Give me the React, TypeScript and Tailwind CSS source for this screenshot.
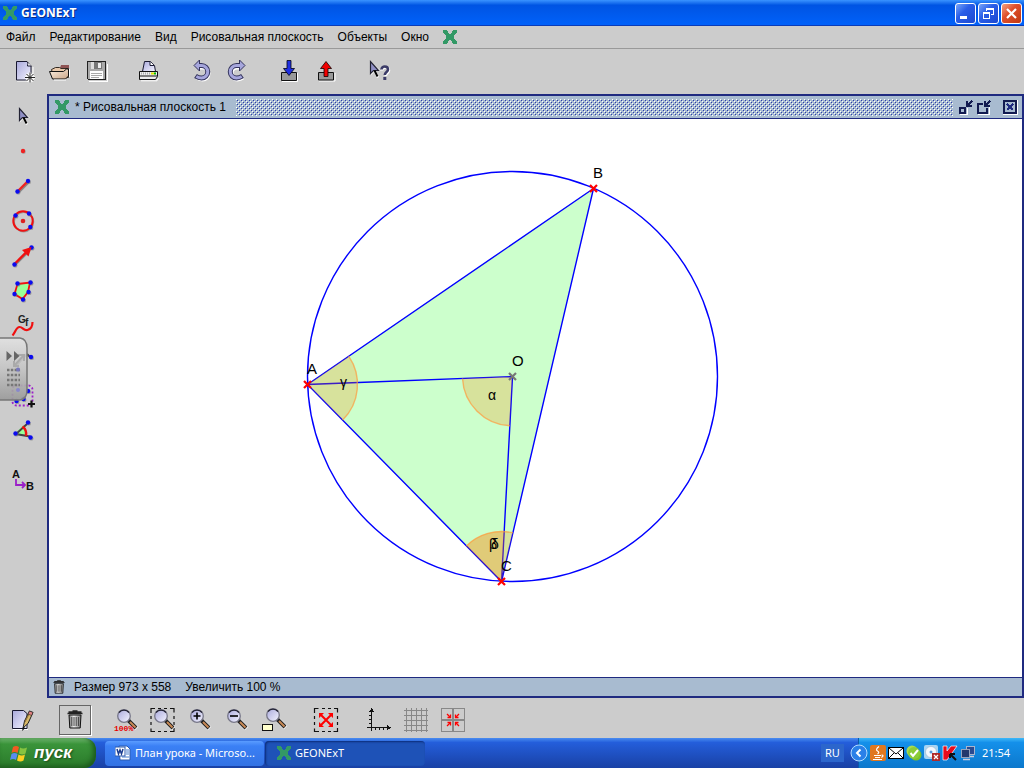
import React from "react";

type IconProps = { children: React.ReactNode; crisp?: boolean };

function Icon({ children, crisp }: IconProps) {
  return (
    <svg
      viewBox="0 0 24 24"
      className="block size-6 shrink-0 overflow-visible"
      fill="none"
      shapeRendering={crisp ? "crispEdges" : "auto"}
      aria-hidden="true"
    >
      {children}
    </svg>
  );
}

function Logo() {
  return (
    <svg viewBox="0 0 14 14" className="block size-3.5 shrink-0" shapeRendering="crispEdges" aria-hidden="true">
      <path
        fill="#339966"
        d="M0 0h4v1h1v2h1v1h2v-1h1v-2h1v-1h4v3h-1v1h-1v1h-1v4h1v1h1v1h1v3h-4v-1h-1v-2h-1v-1h-2v1h-1v2h-1v1h-4v-3h1v-1h1v-1h1v-4h-1v-1h-1v-1h-1z"
      />
    </svg>
  );
}

function ToolButton({ label, children }: { label: string; children: React.ReactNode }) {
  return (
    <button type="button" aria-label={label} className="block size-6 shrink-0">
      {children}
    </button>
  );
}

function Defs() {
  return (
    <svg className="absolute size-0" aria-hidden="true">
      <defs>
        <linearGradient id="lav" x1="0" y1="0" x2="1" y2="1">
          <stop offset="0" stopColor="#a9a9dc" />
          <stop offset="1" stopColor="#f4f4ff" />
        </linearGradient>
        <linearGradient id="tan" x1="0" y1="0" x2="1" y2="1">
          <stop offset="0" stopColor="#fff4e6" />
          <stop offset="1" stopColor="#c9a385" />
        </linearGradient>
        <linearGradient id="steel" x1="0" y1="0" x2="1" y2="0">
          <stop offset="0" stopColor="#777" />
          <stop offset="0.4" stopColor="#eee" />
          <stop offset="1" stopColor="#777" />
        </linearGradient>
        <linearGradient id="tab" x1="0" y1="0" x2="0" y2="1">
          <stop offset="0" stopColor="#e2e2e2" />
          <stop offset="0.5" stopColor="#c4c4c4" />
          <stop offset="1" stopColor="#999" />
        </linearGradient>
        <pattern id="bumps" width="4" height="4" patternUnits="userSpaceOnUse">
          <path fill="#fff" d="M0 0h1v1h-1zM2 2h1v1h-1z" />
          <path fill="#2a3cb0" d="M1 1h1v1h-1zM3 3h1v1h-1z" />
        </pattern>
      </defs>
    </svg>
  );
}

function ArrowCursor({ x, y }: { x: number; y: number }) {
  return (
    <g transform={`translate(${x} ${y})`}>
      <path d="M1 1v13l3-3 3 6 2-1-3-6h5z" fill="#fff" />
      <path d="M.5 .5v12l3-3h5z" fill="#8f8fc4" stroke="#223" strokeWidth="1.200" />
      <path d="M4.500 9.500l3 6" stroke="#000" strokeWidth="2" />
    </g>
  );
}

function Lens({ x = 0, y = 0, sign }: { x?: number; y?: number; sign?: "plus" | "minus" }) {
  return (
    <g transform={`translate(${x} ${y})`}>
      <path d="M13 12l7.500 7.500" stroke="#fff" strokeWidth="5" />
      <path d="M12 11l8 8" stroke="#222" strokeWidth="4" />
      <path d="M14 13l5.500 5.500" stroke="#c98a55" strokeWidth="2" />
      <circle cx="8" cy="7" r="6.300" fill="url(#lav)" stroke="#778" strokeWidth="1.300" />
      <path d="M3 3.500a6.300 6.300 0 0 1 10 0" stroke="#223" strokeWidth="1.300" />
      {sign && <path d={sign === "plus" ? "M4.500 7h7M8 3.500v7" : "M4 7h8"} stroke="#000" strokeWidth="1.600" />}
    </g>
  );
}

function Dot({ x, y }: { x: number; y: number }) {
  return (
    <>
      <circle cx={x + 0.8} cy={y + 0.9} r="2.200" fill="#777" opacity="0.6" />
      <circle cx={x} cy={y} r="2.200" fill="#0b0bef" />
    </>
  );
}

function TrashShape() {
  return (
    <>
      <path d="M6 8h12l-.8 13h-10.400z" fill="url(#steel)" stroke="#111" />
      <path d="M8.800 10v9M11 10v9M13.200 10v9M15.400 10v9" stroke="#333" strokeWidth=".9" />
      <path d="M4.500 6.500h15M9.500 4h5M5.500 5h13" stroke="#222" strokeWidth="1.300" />
    </>
  );
}

function TopToolbar() {
  return (
    <div role="toolbar" aria-label="Файл" className="flex h-[45px] shrink-0 items-center gap-7 px-[13px] pb-px">
      <div className="flex gap-3">
        <ToolButton label="Новый">
          <Icon>
            <path d="M4 22h15M20 8v8" stroke="#fff" />
            <path d="M3.500 2.500h10.500l4 4.500v14h-14.500z" fill="url(#lav)" stroke="#181830" />
            <path d="M13.500 2.500c2 1 1 3 1 4.500h4" fill="#fff" stroke="#181830" />
            <path d="M12 18.500h10M17 13.500v10M13.500 15l7 7M20.500 15l-7 7" stroke="#fff" strokeWidth="2.500" />
            <path d="M12 18.500h10M17 13.500v10M13.500 15l7 7M20.500 15l-7 7" stroke="#222" strokeWidth="1" />
          </Icon>
        </ToolButton>
        <ToolButton label="Открыть">
          <Icon>
            <path d="M12 6h8v3h-9z" fill="#8f5454" />
            <path d="M2.500 10.500l4-2h4l1.500 1h7.500v9h-15z" fill="#e8c8aa" stroke="#332a22" />
            <path d="M.5 12.500h14l3-2.500h2v7l-3 3h-13z" fill="url(#tan)" stroke="#111" />
            <path d="M5 21h12M20.500 10v8" stroke="#fff" />
          </Icon>
        </ToolButton>
        <ToolButton label="Сохранить">
          <Icon crisp>
            <path d="M4 22h18V5" stroke="#fff" />
            <path d="M2.500 2.500h18v18h-17l-1-1z" fill="#aaa" stroke="#222" />
            <rect x="6" y="3" width="11" height="7" fill="#ddd" />
            <rect x="9" y="3" width="8" height="7" fill="#777" />
            <rect x="13" y="4" width="3" height="5" fill="#eee" />
            <rect x="5" y="12" width="13" height="8" fill="#fff" />
            <path d="M6 14.500h11M6 16.500h11M6 18.500h8" stroke="#aaa" />
          </Icon>
        </ToolButton>
      </div>
      <ToolButton label="Печать">
        <Icon>
          <path d="M5.500 12.500l2-10h6l4 4 1 6z" fill="url(#lav)" stroke="#181830" />
          <path d="M13 2.500v4h4" fill="#fff" stroke="#181830" />
          <path d="M2.500 12.500h18v5l-2 3h-16z" fill="#eee" stroke="#111" />
          <path d="M3 17h17" stroke="#111" />
          <path d="M4 14.500h10" stroke="#aaa" strokeWidth="2" strokeDasharray="1 1" />
          <rect x="14" y="13.500" width="3" height="2" fill="#e8e800" />
          <rect x="17" y="13.500" width="2" height="2" fill="#0b0" />
          <path d="M4 21.800h16l1.500-3" stroke="#fff" />
        </Icon>
      </ToolButton>
      <div className="flex gap-3">
        <ToolButton label="Отменить">
          <Icon>
            <path d="M10 7.500h2.500a5.700 5.700 0 0 1 0 12q-3 0-5.500-2" transform="translate(1 1)" stroke="#fff" strokeWidth="4" />
            <path d="M10 6.500h2.500a6 6 0 0 1 0 12.500q-3 0-6-2" stroke="#33335c" strokeWidth="5" />
            <path d="M5 6.500l5.500-5.500v11z" fill="#a6a6dc" stroke="#33335c" />
            <path d="M9 6.500h3.500a6 6 0 0 1 0 12.500q-2.500 0-5.200-1.500" stroke="#a6a6dc" strokeWidth="3" />
          </Icon>
        </ToolButton>
        <ToolButton label="Повторить">
          <Icon>
            <path d="M14 7.500h-2.500a5.700 5.700 0 0 0 0 12q3 0 5.500-2" transform="translate(1 1)" stroke="#fff" strokeWidth="4" />
            <path d="M15 6.500h-3.500a6 6 0 0 0 0 12.500q3 0 6-2" stroke="#33335c" strokeWidth="5" />
            <path d="M20 6.500l-5.500-5.500v11z" fill="#a6a6dc" stroke="#33335c" />
            <path d="M16 6.500h-4.500a6 6 0 0 0 0 12.500q2.500 0 5.200-1.500" stroke="#a6a6dc" strokeWidth="3" />
          </Icon>
        </ToolButton>
      </div>
      <div className="flex gap-3">
        <ToolButton label="Импорт">
          <Icon>
            <path d="M5 22.500h15.500V14" stroke="#fff" />
            <path d="M4.500 13.500h15v8h-15z" fill="#999" stroke="#111" />
            <path d="M10 1.500h4v8h3.500l-5.500 7-5.500-7h3.500z" fill="#1f2fe0" stroke="#001" strokeWidth=".8" />
          </Icon>
        </ToolButton>
        <ToolButton label="Экспорт">
          <Icon>
            <path d="M6 22h16V14" stroke="#fff" />
            <path d="M5.500 13.500h15v7.500h-15z" fill="#999" stroke="#111" />
            <path d="M11 17.500h4v-8h3.500l-5.500-7-5.500 7h3.500z" fill="#f00000" stroke="#100" strokeWidth=".8" />
          </Icon>
        </ToolButton>
      </div>
      <ToolButton label="Справка">
        <Icon>
          <ArrowCursor x={5} y={2} />
          <path d="M16 10.500c0-4 7-4 7 0c0 2.500-3.200 2.500-3.200 5.500" transform="translate(1 1)" stroke="#fff" strokeWidth="2.500" />
          <path d="M16.500 10.500c0-4 6.500-4 6.500 0c0 2.500-3.200 2.500-3.200 5.500" stroke="#3c3c68" strokeWidth="2.600" />
          <rect x="18.300" y="18" width="3" height="3" fill="#3c3c68" />
        </Icon>
      </ToolButton>
    </div>
  );
}

function LeftToolbar() {
  return (
    <aside className="relative flex w-[47px] shrink-0 flex-col items-center gap-[11px] pt-[10px] pr-px">
      <ToolButton label="Указатель">
        <Icon>
          <ArrowCursor x={8} y={4} />
        </Icon>
      </ToolButton>
      <ToolButton label="Точка">
        <Icon>
          <circle cx="12.700" cy="12.800" r="2.200" fill="#888" opacity=".5" />
          <circle cx="12" cy="12" r="2.200" fill="#e22" />
        </Icon>
      </ToolButton>
      <ToolButton label="Отрезок">
        <Icon>
          <path d="M7.500 18.500l10-10" stroke="#888" strokeWidth="2.400" />
          <path d="M6.500 17.500l10-10" stroke="#e22" strokeWidth="2.400" />
          <Dot x={6.5} y={17.5} />
          <Dot x={17} y={7} />
        </Icon>
      </ToolButton>
      <ToolButton label="Окружность">
        <Icon>
          <circle cx="12.700" cy="12.800" r="9.700" stroke="#999" strokeWidth="1.800" />
          <circle cx="12" cy="12" r="9.700" stroke="#f01010" strokeWidth="2" />
          <circle cx="12" cy="12" r="2.300" fill="#d22" />
          <Dot x={4.5} y={6.5} />
          <Dot x={18} y={4.5} />
          <Dot x={19.3} y={18} />
        </Icon>
      </ToolButton>
      <ToolButton label="Вектор">
        <Icon>
          <path d="M4 21l15-15" stroke="#888" strokeWidth="2.400" />
          <path d="M3.500 20l15-15" stroke="#f01010" strokeWidth="2.400" />
          <Dot x={3.5} y={20.5} />
          <Dot x={20.5} y={3.5} />
          <path d="M20.500 3l-3 9.500-6.500-6.500z" fill="#f01010" />
        </Icon>
      </ToolButton>
      <ToolButton label="Многоугольник">
        <Icon>
          <path d="M6.500 5l12.500-1.500-2 9.500-5.500 7-8-5z" fill="#9f9" stroke="#f01010" strokeWidth="1.800" />
          <Dot x={6.5} y={4.5} />
          <Dot x={19.5} y={3.5} />
          <Dot x={17.5} y={13} />
          <Dot x={12} y={20.5} />
          <Dot x={3.5} y={15} />
        </Icon>
      </ToolButton>
      <ToolButton label="Функция">
        <Icon>
          <path d="M1.500 21.500c3-3 3.500-8.500 7-8.500s4 4 8 3s5-4 5-8" stroke="#f01010" strokeWidth="2.200" />
          <text x="7" y="9" fontSize="10" fontWeight="700" fill="#222" className="font-['Liberation_Sans',sans-serif]">
            G
          </text>
          <text x="14" y="12" fontSize="10" fontWeight="700" fill="#222" className="font-['Liberation_Sans',sans-serif]">
            f
          </text>
        </Icon>
      </ToolButton>
      <ToolButton label="Прямая">
        <Icon>
          <path d="M4 18l12-13M16 5l4 4" stroke="#444" strokeWidth="2" />
          <Dot x={20} y={8} />
          <Dot x={7} y={21} />
        </Icon>
      </ToolButton>
      <ToolButton label="Группа">
        <Icon>
          <rect x="1.500" y="1.500" width="20" height="20" rx="4" stroke="#9b1fc8" strokeWidth="1.800" strokeDasharray="2 2" />
          <Dot x={17} y={7} />
          <Dot x={12.5} y={15} />
          <Dot x={5.5} y={17} />
          <path d="M17 20h7M20.500 16.500v7" stroke="#111" strokeWidth="2.200" />
        </Icon>
      </ToolButton>
      <ToolButton label="Угол">
        <Icon>
          <path d="M4 14.500l8-8q4 3 3 9z" fill="#9f9" />
          <path d="M16 5l-11 10 14 2.500" stroke="#444" strokeWidth="2" />
          <path d="M11.500 7.500q4.500 3.500 3.500 9.500" stroke="#f01010" strokeWidth="2.400" />
          <Dot x={4.5} y={14.5} />
          <Dot x={17} y={3.5} />
          <Dot x={19.5} y={18.5} />
        </Icon>
      </ToolButton>
      <div className="mt-3.5">
        <ToolButton label="Текст">
          <Icon>
            <text x="1" y="10" fontSize="11" fontWeight="700" fill="#111" className="font-['Liberation_Sans',sans-serif]">
              A
            </text>
            <text x="15" y="22" fontSize="11" fontWeight="700" fill="#111" className="font-['Liberation_Sans',sans-serif]">
              B
            </text>
            <path d="M5 11v6h8M11 14l3 3-3 3" stroke="#9b1fc8" strokeWidth="1.800" />
          </Icon>
        </ToolButton>
      </div>
      <button type="button" aria-label="Панель" className="absolute top-[243px] left-0 h-16 w-7">
        <svg viewBox="0 0 28 64" className="block h-full w-full" fill="none" aria-hidden="true">
          <path d="M-2 1h22q7 1 7 10v42q0 9-7 10h-22z" fill="url(#tab)" fillOpacity=".9" stroke="#777" strokeWidth="1.500" />
          <path d="M14 29l10-11M18 18h6v6M14 24v5h5" stroke="#aaa" strokeWidth="2" />
          <path d="M6.500 14v10l5.500-5zM14 14v10l5.500-5z" fill="#666" />
          <path d="M7 33h13M7 38h13M7 43h13M7 48h13" stroke="#777" strokeWidth="2.500" strokeDasharray="2.500 1.300" />
          <circle cx="18" cy="32.500" r="2" fill="#7777bb" />
          <circle cx="18" cy="53" r="2" fill="#8888cc" />
        </svg>
      </button>
    </aside>
  );
}

const points = [
  { x: 307.5, y: 384.5, color: "#ff0000" },
  { x: 593.5, y: 188.5, color: "#ff0000" },
  { x: 501.5, y: 581.5, color: "#ff0000" },
  { x: 512.5, y: 376.5, color: "#777777" },
];

const labels = [
  { t: "A", x: 307, y: 374 },
  { t: "B", x: 593, y: 178 },
  { t: "C", x: 501, y: 571 },
  { t: "O", x: 512, y: 366 },
  { t: "α", x: 488, y: 400 },
  { t: "γ", x: 340, y: 387 },
  { t: "β", x: 489, y: 549 },
  { t: "δ", x: 491, y: 549 },
];

function Drawing() {
  return (
    <svg viewBox="49 119 973 558" className="block min-h-0 w-full flex-1 bg-white" fill="none">
      <polygon points="307.5,384.5 593.5,188.5 501.5,581.5" fill="#ccffcc" />
      <g stroke="#0000ff" strokeWidth="1.400">
        <circle cx="512.5" cy="376.5" r="205" />
        <path d="M307.500 384.500L593.500 188.500L501.500 581.500L307.500 384.500L512.500 376.500L501.500 581.500" />
      </g>
      <g fill="#ff8000" fillOpacity="0.23">
        <path d="M307.500 384.500L348.700 356.200A50 50 0 0 1 342.600 420.100z" />
        <path d="M512.500 376.500L462.500 378.500A50 50 0 0 0 509.800 425.800z" />
        <path d="M501.500 581.500L466.400 545.900A50 50 0 0 1 504.200 531.600z" />
        <path d="M501.500 581.500L466.400 545.900A50 50 0 0 1 512.900 532.800z" />
      </g>
      <g stroke="#ff9a3c" strokeOpacity="0.7" strokeWidth="1.400">
        <path d="M348.700 356.200A50 50 0 0 1 342.600 420.100" />
        <path d="M462.500 378.500A50 50 0 0 0 509.800 425.800" />
        <path d="M466.400 545.900A50 50 0 0 1 512.900 532.800" />
      </g>
      {points.map((p) => (
        <path
          key={`${p.x}`}
          d={`M${p.x - 3.5} ${p.y - 3.5}l7 7m0 -7l-7 7`}
          stroke={p.color}
          strokeWidth="2.200"
        />
      ))}
      {labels.map((l) => (
        <text
          key={l.t}
          x={l.x}
          y={l.y}
          fill="#000"
          fontSize={l.t < "a" ? 15 : 14}
          className="font-['Liberation_Sans',sans-serif]"
        >
          {l.t}
        </text>
      ))}
    </svg>
  );
}

function InnerFrame() {
  return (
    <section className="flex min-w-0 flex-1 flex-col border-2 border-[#1f2a80] bg-[#a8bbd0]">
      <header className="flex h-[23px] shrink-0 items-center border-b border-[#1f2a80] pr-[5px] pl-1.5">
        <Logo />
        <h2 className="mr-2.5 ml-1.5 text-xs whitespace-nowrap">* Рисовальная плоскость 1</h2>
        <svg className="h-[17px] min-w-0 flex-1" shapeRendering="crispEdges" aria-hidden="true">
          <rect width="100%" height="100%" fill="url(#bumps)" />
        </svg>
        <div className="ml-1.5 flex items-center">
          <button type="button" aria-label="Свернуть" className="mr-1 block size-3.5">
            <svg viewBox="0 0 14 14" className="block size-full overflow-visible" fill="none" shapeRendering="crispEdges" aria-hidden="true">
              <path d="M1 14h7V8" stroke="#fff" />
              <rect x="1" y="8" width="5" height="5" stroke="#111a50" strokeWidth="2" />
              <path d="M8 1v5h5M8 6l5-5" stroke="#111a50" strokeWidth="2" />
            </svg>
          </button>
          <button type="button" aria-label="Развернуть" className="mr-3 block size-3.5">
            <svg viewBox="0 0 14 14" className="block size-full overflow-visible" fill="none" shapeRendering="crispEdges" aria-hidden="true">
              <path d="M1 14h11V7" stroke="#fff" />
              <path d="M6 4h-5v9h9V8" stroke="#111a50" strokeWidth="2" />
              <path d="M8 1v5h5M8 6l5-5" stroke="#111a50" strokeWidth="2" />
            </svg>
          </button>
          <button type="button" aria-label="Закрыть" className="block size-3.5">
            <svg viewBox="0 0 14 14" className="block size-full overflow-visible" fill="none" shapeRendering="crispEdges" aria-hidden="true">
              <path d="M0 14.500h14.500V0" stroke="#fff" />
              <rect x="1" y="1" width="12" height="12" stroke="#111a50" strokeWidth="2" />
              <path d="M4 4l6 6M10 4l-6 6" stroke="#1f2a80" strokeWidth="2" />
            </svg>
          </button>
        </div>
      </header>
      <Drawing />
      <footer className="flex h-[19px] shrink-0 items-center border-t border-[#1f2a80] pl-[3px] text-xs whitespace-nowrap">
        <svg viewBox="4 3 16 19" className="mr-2 block h-3.5 w-3.5" fill="none" aria-hidden="true">
          <TrashShape />
        </svg>
        <span className="mr-3.5">Размер 973 x 558</span>
        <span>Увеличить 100 %</span>
      </footer>
    </section>
  );
}

function BottomToolbar() {
  return (
    <div role="toolbar" aria-label="Вид" className="flex h-10 shrink-0 items-center pt-1 pl-2.5">
      <ToolButton label="Правка">
        <Icon>
          <path d="M2.500 2.500h11l3.500 3v15h-14.500z" fill="url(#lav)" stroke="#181830" />
          <path d="M3 21.500h15" stroke="#fff" />
          <path d="M13 20l1.500-7 5-10 3.500 1.500-5 11z" fill="#d9b96a" stroke="#222" />
          <path d="M15 14l5-10" stroke="#8a6a30" />
          <path d="M19.500 3l3.500 1.500-1.500 3-3.500-1.500z" fill="#e08080" stroke="#222" strokeWidth=".6" />
          <path d="M12 23l1-4 2.500 1z" fill="#111" />
        </Icon>
      </ToolButton>
      <button
        type="button"
        aria-label="Корзина"
        className="ml-[25px] flex h-[30px] w-8 items-center justify-center border border-[#666] shadow-[1px_1px_0_#fff]"
      >
        <Icon>
          <g transform="translate(0 -1)">
            <TrashShape />
          </g>
        </Icon>
      </button>
      <div className="ml-[22px] flex gap-[13px]">
        <ToolButton label="100%">
          <Icon>
            <Lens x={3} y={1} />
            <text x="1" y="23" fontSize="8" fontWeight="700" fill="#e80000" className="font-['Liberation_Mono',monospace]">
              100%
            </text>
          </Icon>
        </ToolButton>
        <ToolButton label="Увеличить область">
          <Icon>
            <path d="M1 5v-4.500h4M8 .500h3M14 .500h3M20 .500h4v4M24 8v3M24 14v3M24 20v3.500h-4M17 23.500h-3M11 23.500h-3M5 23.500h-4v-3M1 17v-3M1 11v-3" stroke="#111" strokeWidth="1.200" />
            <Lens x={3} y={1} />
          </Icon>
        </ToolButton>
        <ToolButton label="Увеличить">
          <Icon>
            <Lens x={2} y={1} sign="plus" />
          </Icon>
        </ToolButton>
        <ToolButton label="Уменьшить">
          <Icon>
            <Lens x={2} y={1} sign="minus" />
          </Icon>
        </ToolButton>
        <ToolButton label="Лупа">
          <Icon>
            <Lens x={4} y={0} />
            <rect x="1.500" y="16.500" width="10" height="6" fill="#ffffcc" stroke="#111" />
          </Icon>
        </ToolButton>
      </div>
      <div className="ml-[29px]">
        <ToolButton label="По размеру">
          <Icon>
            <path d="M.5 5v-4.500h4M8 .500h3M14 .500h3M20 .500h3.500v4M23.500 8v3M23.500 14v3M23.500 20v3.500h-4M17 23.500h-3M11 23.500h-3M5 23.500h-4.500v-3M.5 17v-3M.5 11v-3" stroke="#111" strokeWidth="1.200" />
            <path d="M7 7l10 10M17 7L7 17" stroke="#f00" strokeWidth="2" />
            <path d="M5 5h5l-5 5zM19 5h-5l5 5zM5 19h5l-5-5zM19 19h-5l5-5z" fill="#f00" />
          </Icon>
        </ToolButton>
      </div>
      <div className="ml-[29px] flex gap-[13px]">
        <ToolButton label="Оси">
          <Icon crisp>
            <path d="M4.500 2v21M0 19.500h22M2 15.500h3M2 11.500h3M2 7.500h3M8.500 19v3M12.500 19v3M16.500 19v3" stroke="#111" />
            <path d="M2 4l2.500-4 3 4zM20 17l4 2.500-4 3z" fill="#111" />
          </Icon>
        </ToolButton>
        <ToolButton label="Сетка">
          <Icon crisp>
            <path d="M0 2.500h24M0 7.500h24M0 12.500h24M0 17.500h24M0 22.500h24M2.500 0v24M7.500 0v24M12.500 0v24M17.500 0v24M22.500 0v24" stroke="#888" />
          </Icon>
        </ToolButton>
        <ToolButton label="Привязка">
          <Icon crisp>
            <rect x=".5" y=".5" width="23" height="23" stroke="#888" />
            <path d="M12 1v22M1 12h22" stroke="#888" strokeWidth="2" />
            <g stroke="#f00" shapeRendering="auto" strokeWidth="1.300">
              <path d="M6 6l3 3M18 6l-3 3M6 18l3-3M18 18l-3-3" />
              <path d="M9.500 6.500v3h-3M14.500 6.500v3h3M9.500 17.500v-3h-3M14.500 17.500v-3h3" />
            </g>
          </Icon>
        </ToolButton>
      </div>
    </div>
  );
}

function Taskbar() {
  return (
    <footer className="flex h-[30px] shrink-0 items-stretch bg-linear-to-b from-[#4a8cf0] via-[#245edb] to-[#1941a5] via-15% font-['Noto_Sans',sans-serif] text-[11px] text-white">
      <button
        type="button"
        className="flex w-24 items-center gap-1.5 rounded-r-xl bg-linear-to-b from-[#6fb56f] via-[#3a943a] to-[#2a7a2a] via-20% pl-2.5 shadow-[inset_-3px_-2px_5px_#1c5a1c]"
      >
        <svg viewBox="0 0 18 18" className="size-[18px] shrink-0" aria-hidden="true">
          <path d="M3 3q3-2 6 0l-1.500 6q-3-2-6 0z" fill="#f25a22" />
          <path d="M10 3.500q3 2 7 0l-1.500 6q-3 2-6.500 0z" fill="#86c440" />
          <path d="M1.500 10q3-2 6 0l-1.500 6q-3-2-6 0z" fill="#5a8cf0" />
          <path d="M8.500 10.500q3 2 6.500 0l-1.500 6q-3 2-6.500 0z" fill="#fcd022" />
        </svg>
        <span className="font-['Liberation_Sans',sans-serif] text-[17px] font-bold italic [text-shadow:1px_1px_2px_#1a4a1a]">
          пуск
        </span>
      </button>
      <div className="ml-[9px] flex items-center gap-px">
        <button
          type="button"
          className="flex h-[25px] w-[159px] items-center gap-1 rounded-sm bg-linear-to-b from-[#5a9cff] via-[#3b80f5] to-[#3272e4] via-20% pl-2.5 whitespace-nowrap"
        >
          <svg viewBox="0 0 16 16" className="size-4 shrink-0" aria-hidden="true">
            <path d="M4 1h8l3 3v11H5z" fill="#fff" stroke="#2a5ab0" />
            <path d="M11 5h3M11 7h3M11 9h3M7 12h7" stroke="#4a80d0" />
            <rect x="0" y="2" width="10" height="9" fill="#fff" stroke="#2a5ab0" />
            <path d="M2 4l1.500 5L5 5l1.500 4L8 4" fill="none" stroke="#1a3c90" strokeWidth="1.500" />
          </svg>
          План урока - Microso...
        </button>
        <button
          type="button"
          className="flex h-[25px] w-40 items-center gap-1 rounded-sm bg-[#1e52b7] pl-3 shadow-[inset_1px_1px_2px_#0c2c78]"
        >
          <Logo />
          GEONExT
        </button>
      </div>
      <div className="mr-3.5 ml-auto flex items-center">
        <span className="bg-[#2c66cc] px-1 py-px">RU</span>
      </div>
      <div className="relative flex items-center gap-0.5 bg-linear-to-b from-[#3cb8f8] via-[#1490ea] to-[#0c78cc] via-15% pr-3.5 pl-2 shadow-[inset_1px_0_0_#0a5aa8]">
        <button type="button" aria-label="Показать значки" className="-ml-4 block size-[18px]">
          <svg viewBox="0 0 18 18" className="block size-full" fill="none" aria-hidden="true">
            <circle cx="9" cy="9" r="8" fill="#2a80e8" stroke="#b4dcff" />
            <path d="M10.500 5.500L7 9l3.500 3.500" stroke="#fff" strokeWidth="2" />
          </svg>
        </button>
        <svg viewBox="0 0 16 16" className="size-4" fill="none" aria-hidden="true">
          <rect width="16" height="16" rx="2" fill="#e07820" />
          <path d="M9 1.500q-4 3-1.500 4.500t0 3M4 10.500h7M5 12.500h5M3 14.500h9M11.500 10q3 0 0 2.500" stroke="#fff" strokeWidth="1.200" />
        </svg>
        <svg viewBox="0 0 16 16" className="size-4" fill="none" aria-hidden="true">
          <rect x=".5" y="2.500" width="15" height="11" fill="#fff" stroke="#000" />
          <path d="M1 3l7 6 7-6M1 13l5-5M15 13l-5-5" stroke="#000" />
        </svg>
        <svg viewBox="0 0 16 16" className="size-4" fill="none" aria-hidden="true">
          <circle cx="6" cy="6" r="5.500" fill="#a8dc50" />
          <circle cx="10" cy="10" r="5.500" fill="#7cc028" />
          <circle cx="8" cy="8" r="6" fill="#8ccc38" />
          <path d="M4.500 8l2.500 3 5-6" stroke="#fff" strokeWidth="2" />
        </svg>
        <svg viewBox="0 0 16 16" className="size-4" fill="none" aria-hidden="true">
          <rect width="14" height="14" rx="2" fill="#a8d4f4" />
          <circle cx="7" cy="7" r="5.500" fill="#f4f8ff" stroke="#9ab" strokeWidth=".5" />
          <circle cx="7" cy="7" r="1.500" fill="#5a9ad8" />
          <rect x="8" y="8" width="8" height="8" fill="#b02a2a" />
          <path d="M10 10l4 4M14 10l-4 4" stroke="#fff" strokeWidth="1.300" />
        </svg>
        <svg viewBox="0 0 16 16" className="size-4" fill="none" aria-hidden="true">
          <path d="M1 1h4v5l4-5h6L5 15H1z" fill="#e80c1c" stroke="#fff" strokeWidth=".7" />
          <path d="M8 9l6 6M8 9h5M8 9v4" stroke="#111" strokeWidth="2" />
        </svg>
        <svg viewBox="0 0 16 16" className="size-4" fill="none" aria-hidden="true">
          <rect x="6.500" y="1.500" width="8" height="8" fill="#2a4a90" stroke="#aab4cc" />
          <path d="M9 11.500h5" stroke="#ccd" strokeWidth="1.500" />
          <rect x="1.500" y="4.500" width="8" height="8" fill="#24386c" stroke="#98a4bc" />
          <path d="M3 14.500h7" stroke="#ccd" strokeWidth="1.500" />
        </svg>
        <time className="ml-1">21:54</time>
      </div>
    </footer>
  );
}

const menuItems = ["Файл", "Редактирование", "Вид", "Рисовальная плоскость", "Объекты", "Окно"];

export default function App() {
  return (
    <div className="flex min-h-screen flex-col bg-[#cccccc] font-['Liberation_Sans',Arial,sans-serif] text-black">
      <Defs />
      <header className="flex h-[26px] shrink-0 items-center bg-linear-to-b from-[#3a93ff] via-[#0054e3] to-[#0062fb] via-20% pr-0.5 pl-[3px] shadow-[inset_0_-1px_0_#0a3cb8]">
        <Logo />
        <h1 className="ml-1 font-['Open_Sans',sans-serif] text-xs font-bold text-white [text-shadow:1px_1px_0_#0a2a80]">
          GEONExT
        </h1>
        <div className="ml-auto flex gap-0.5">
          <button type="button" aria-label="Свернуть окно" className="size-[21px] rounded-[3px] border border-white bg-linear-to-br from-[#7aa4f8] via-[#2a5ee8] to-[#1c48d0] via-40%">
            <svg viewBox="0 0 19 19" className="block size-full" aria-hidden="true">
              <rect x="4" y="12" width="7" height="3" fill="#fff" />
            </svg>
          </button>
          <button type="button" aria-label="Восстановить окно" className="size-[21px] rounded-[3px] border border-white bg-linear-to-br from-[#7aa4f8] via-[#2a5ee8] to-[#1c48d0] via-40%">
            <svg viewBox="0 0 19 19" className="block size-full" fill="none" shapeRendering="crispEdges" aria-hidden="true">
              <path d="M7.500 7V4.500h7v6H12M7 5h8" stroke="#fff" />
              <path d="M4.500 8.500h6v6h-6zM4 9h7" stroke="#fff" />
            </svg>
          </button>
          <button type="button" aria-label="Закрыть окно" className="size-[21px] rounded-[3px] border border-white bg-linear-to-br from-[#f0a080] via-[#e0502c] to-[#c03810] via-40%">
            <svg viewBox="0 0 19 19" className="block size-full" fill="none" aria-hidden="true">
              <path d="M5 5l9 9M14 5l-9 9" stroke="#fff" strokeWidth="2.200" />
            </svg>
          </button>
        </div>
      </header>
      <nav className="flex h-[23px] shrink-0 items-center gap-3.5 border-b border-[#999] px-1.5 text-xs">
        {menuItems.map((item) => (
          <button key={item} type="button" className="whitespace-nowrap">
            {item}
          </button>
        ))}
        <Logo />
      </nav>
      <TopToolbar />
      <main className="flex min-h-0 flex-1">
        <LeftToolbar />
        <InnerFrame />
      </main>
      <BottomToolbar />
      <Taskbar />
    </div>
  );
}
